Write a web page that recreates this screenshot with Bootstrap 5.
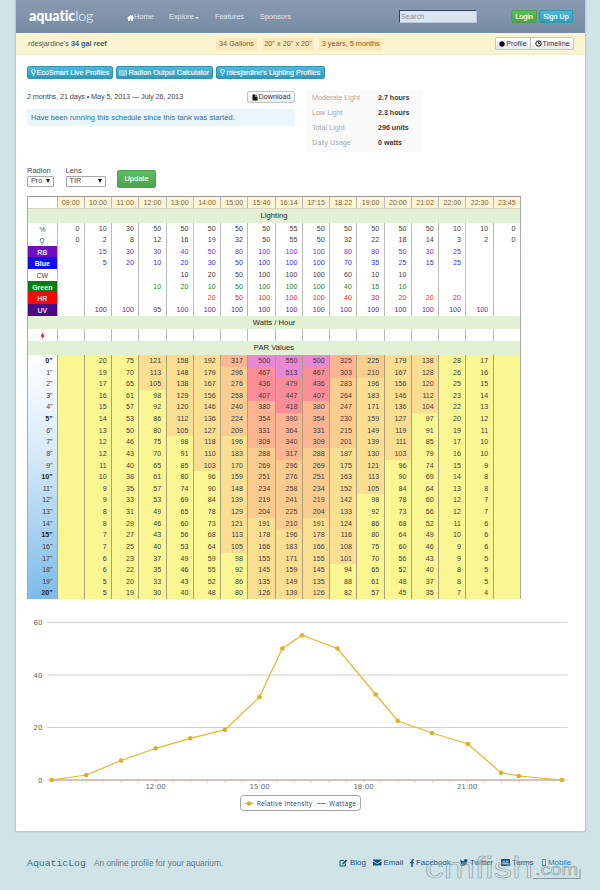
<!DOCTYPE html>
<html lang="en">
<head>
<meta charset="utf-8">
<meta name="viewport" content="width=device-width, initial-scale=1">
<title>AquaticLog</title>
<link href="https://cdn.jsdelivr.net/npm/bootstrap@5.3.0/dist/css/bootstrap.min.css" rel="stylesheet">
<style>
body{font-family:"Liberation Sans",Arial,sans-serif;font-size:7.5px;line-height:1.2;color:#4a4450;background:#d0e4e8;height:890px;overflow:hidden}
a{text-decoration:none}
svg{flex:none}
.sheet{width:569px;height:831px;margin-left:16px;background:#fff;box-shadow:0 0 1.5px 1px #b2c5cf}
.topbar{height:33px;padding:0 11px 0 13px;background:linear-gradient(#899bb0,#778ca6)}
.logo{font-family:Lato,sans-serif;font-weight:900;font-size:14.3px;color:#fff;width:98px;letter-spacing:-.1px;line-height:1}
.logo span{font-weight:300}
.topbar .menu{padding-top:2px}
.topbar .menu a{color:#e3e9f0;font-size:7.35px}
.w-home{width:42px}.w-exp{width:46px}.w-feat{width:45px}.w-spon{width:139px}
.caret{border:2.5px solid transparent;border-top-color:#fff;border-bottom:0;margin-left:1px}
.search{width:78px;height:13px;border:1px solid #34445a;border-right-color:#bccadb;border-bottom-color:#bccadb;border-radius:0;background:#dbe5f2;font-size:7.3px;padding:0 1px;margin-right:34px}
.search::placeholder{color:#8792a2}
.btn{--bs-btn-padding-x:0;--bs-btn-padding-y:0;--bs-btn-border-radius:2px;--bs-btn-font-size:7.2px;--bs-btn-line-height:1;height:13px;display:flex;align-items:center;justify-content:center;gap:1px;white-space:nowrap}
.btn-teal{--bs-btn-color:#f0fbff;--bs-btn-border-color:#2f95b4;background:linear-gradient(#50b9d8,#3199ba);-webkit-text-stroke:.15px}
.btn-leaf{--bs-btn-color:#f4fff4;--bs-btn-border-color:#4ba44b;background:linear-gradient(#5dbd5d,#4ba44b);-webkit-text-stroke:.15px}
.btn-plain{--bs-btn-color:#3c3440;--bs-btn-border-color:#c4c4c8;background:linear-gradient(#fff,#e9e9ec)}
.tankbar{height:22px;background:#faf5d0;border-bottom:1px solid #f2ecc4;padding:0 11px 0 12px}
.tankbar .owner{width:188px;color:#2a6173;font-size:7.25px;padding-top:1px}
.fact{height:12px;background:#fce8ba;color:#7b6030;border-radius:1px;font-size:7.3px;display:flex;align-items:center;justify-content:center;padding-top:1px}
.content-pad{padding:11px 11px 0}
.upper{height:86px}
.left-col{width:268px}
.dates{font-size:7.3px;line-height:11px;letter-spacing:-.11px}
.note{height:17px;background:#ebf5fc;color:#2f6f8d;padding-left:4px;font-size:7.5px;letter-spacing:.04px;margin-top:6px;border-radius:1px}
.stats{width:117px;height:61px;background:#fafafa;padding:0 6px;margin-left:11px}
.stats dt{width:66px;font-weight:400;color:#aaa;font-size:7.2px}
.stats dd{margin:0;font-weight:700;color:#3a3a3e;font-size:7.1px}
.stats div{height:15px}
.picker{height:11.5px;border:1px solid #aaa;border-radius:1px;padding:0 3px;font-size:7.3px;background:#fdfdfd;display:flex;align-items:center;justify-content:space-between;margin-top:1px}
.picker i{border:2px solid transparent;border-top:4px solid #111;border-bottom:0}
.controls{height:31px;padding-top:1px}
.plan{width:494px;display:block;border:1px solid #aaa;border-bottom:0;border-top-color:#999;font-size:7.1px;color:#443b40}
.plan thead,.plan tbody{display:block}
.plan tr{display:grid;grid-template-columns:28.6px repeat(17,minmax(0,1fr));height:11.63px}
.plan td,.plan th{height:100%;padding:0 4.5px 0 0;border-left:1px solid #b9b9b4;text-align:right;line-height:13.4px;font-weight:400;overflow:hidden}
.plan tr>:first-child{border-left:0}
.plan .hours{height:12.2px;font-size:7.1px}
.plan .hours th{background:#fdf5d6;color:#79663a;text-align:center;padding:0;border-bottom:1px solid #d9d4bd}
.plan .hours th:first-child{background:#fff}
.plan .band{display:block;height:13.9px;background:#e2f0d6}
.plan .band td{display:block;text-align:center;padding:0;line-height:14.4px;font-size:7.7px;color:#2a2a2a;border:0}
.plan .lit th{text-align:center;padding:0;font-size:7px}
.k-rb th{background:#6e0cc4;color:#e8d5ff!important;font-weight:700!important}.k-rb td{color:#7a2cc8}
.k-blue th{background:#1111e0;color:#fff;font-weight:700!important}.k-blue td{color:#3730e0}
.k-green th{background:#087c10;color:#e5ffe5;font-weight:700!important}.k-green td{color:#2a8032}
.k-hr th{background:#fb0509;color:#ffd5d5;font-weight:700!important}.k-hr td{color:#ee2630}
.k-uv th{background:#4a0a88;color:#e5d5ff;font-weight:700!important}.k-uv td{color:#5f2790}
.depths{background:linear-gradient(90deg,transparent 28.6px,#faf793 28.6px),linear-gradient(#fff,#d8eafa 40%,#7dbbe8)}
.plan .depths th{padding-right:4px}
.plan .depths tr td{border-left-color:#a9a478}
.plan .depths tr:nth-child(5n+1) th{font-weight:700;color:#222}
.p1{background:#fade92}.p2{background:#fbcc90}.p3{background:#fdb490}.p4{background:#fb8d96}.p5{background:#e887d2}
.chart{display:block;margin:0 0 0 -11px}
.chart text{font-family:"DejaVu Sans",sans-serif;font-size:7px;fill:#666}
.chart .key text{font-family:"Open Sans",sans-serif;font-size:6.7px;fill:#274b6d}
.foot{padding:27px 0 0 27px;font-size:7.9px;height:59px;position:relative}
.foot .name{font-family:"Liberation Mono",monospace;font-size:9.8px;color:#2b718c;width:67px}
.foot .tag{color:#65777e;font-size:8.3px;width:245px;padding-top:1px}
.foot a{color:#17527c;display:flex;align-items:center;white-space:nowrap;gap:2px}
.stamp{position:absolute;left:424px;top:16px}
.stamp text{font-family:"Liberation Sans",sans-serif;fill:rgba(208,228,232,.25);stroke:#83949a;stroke-width:.5px}
</style>
</head>
<body>
<main class="sheet">
  <nav class="topbar d-flex align-items-center">
    <a class="logo" href="#">aquatic<span>log</span></a>
    <div class="menu d-flex">
      <a href="#" class="w-home d-flex align-items-center"><svg width="7" height="6" viewBox="0 0 14 12"><path fill="#fff" d="M7 0 0 6l1 1 1-1v6h4V8h2v4h4V6l1 1 1-1-2-2V1h-2v1z"/></svg>Home</a>
      <a href="#" class="w-exp d-flex align-items-center">Explore<span class="caret"></span></a>
      <a href="#" class="w-feat">Features</a>
      <a href="#" class="w-spon">Sponsors</a>
    </div>
    <input class="form-control search" placeholder="Search">
    <div class="d-flex login-set">
      <a class="btn btn-leaf" href="#" style="width:26px">Login</a>
      <a class="btn btn-teal" href="#" style="width:34px;margin-left:2px">Sign Up</a>
    </div>
  </nav>
  <div class="tankbar d-flex align-items-center">
    <span class="owner">rdesjardine's <b>34 gal reef</b></span>
    <span class="fact" style="width:41px">34 Gallons</span>
    <span class="fact" style="width:51px;margin-left:5.5px">20" x 20" x 20"</span>
    <span class="fact" style="width:63.5px;margin-left:5.5px">3 years, 5 months</span>
    <div class="btn-group ms-auto">
      <a class="btn btn-plain" href="#" style="width:36px"><svg width="6" height="6"><circle cx="3" cy="3" r="2.7" fill="#111"/></svg>Profile</a>
      <a class="btn btn-plain" href="#" style="width:44px"><svg width="7" height="7"><circle cx="3.5" cy="3.5" r="2.7" fill="none" stroke="#111"/><path d="M3.5 1.5v2H5" fill="none" stroke="#111" stroke-width=".8"/></svg>Timeline</a>
    </div>
  </div>
  <div class="content-pad">
    <div class="d-flex mb-0" style="gap:2.5px;height:25px">
      <a class="btn btn-teal" href="#" style="width:86px"><svg width="5" height="7" viewBox="0 0 5 7"><path d="M1.7 4.7C1.7 3.5.6 3.3.6 2.2a1.9 1.7 0 0 1 3.8 0c0 1.1-1.1 1.3-1.1 2.5zM1.7 6.2h1.6" fill="none" stroke="#fff" stroke-width=".9"/></svg>EcoSmart Live Profiles</a>
      <a class="btn btn-teal" href="#" style="width:97.5px"><svg width="8" height="6" viewBox="0 0 8 6"><path d="M.4.9h7.2v4.2H.4z" fill="none" stroke="#fff" stroke-width=".7"/><path d="M1.2 2.2h5.6M1.2 3.2h5.6M2 4.2h4" stroke="#fff" stroke-width=".6" stroke-dasharray=".7 .3"/></svg>Radion Output Calculator</a>
      <a class="btn btn-teal" href="#" style="width:109.5px"><svg width="5" height="7" viewBox="0 0 5 7"><path d="M1.7 4.7C1.7 3.5.6 3.3.6 2.2a1.9 1.7 0 0 1 3.8 0c0 1.1-1.1 1.3-1.1 2.5zM1.7 6.2h1.6" fill="none" stroke="#fff" stroke-width=".9"/></svg>rdesjardine's Lighting Profiles</a>
    </div>
    <div class="upper d-flex">
      <div class="left-col">
        <div class="d-flex justify-content-between">
          <span class="dates">2 months, 21 days • May 5, 2013 — July 26, 2013</span>
          <a class="btn btn-plain" href="#" style="width:48px;height:12px"><svg width="6" height="7"><path d="M.5.5H3v2.3h2.5V6.5h-5zM3.5.5l2 1.8h-2z" fill="#111"/></svg>Download</a>
        </div>
        <div class="note d-flex align-items-center">Have been running this schedule since this tank was started.</div>
      </div>
      <dl class="stats mb-0">
        <div class="d-flex align-items-center"><dt>Moderate Light</dt><dd>2.7 hours</dd></div>
        <div class="d-flex align-items-center"><dt>Low Light</dt><dd>2.3 hours</dd></div>
        <div class="d-flex align-items-center"><dt>Total Light</dt><dd>296 units</dd></div>
        <div class="d-flex align-items-center"><dt>Daily Usage</dt><dd>0 watts</dd></div>
      </dl>
    </div>
    <div class="controls d-flex align-items-start" style="margin-top:-12.5px">
      <div style="width:38.5px">Radion<div class="picker" style="width:27px">Pro <i></i></div></div>
      <div style="width:51.5px">Lens<div class="picker" style="width:40.5px">TIR <i></i></div></div>
      <a class="btn btn-leaf" href="#" style="width:39px;height:18px;font-size:7.5px;margin-top:4px">Update</a>
    </div>
    <table class="plan" id="plan"></table>
    <svg class="chart" id="chart" width="569" height="224" viewBox="16 599 569 224"></svg>
  </div>
</main>
<footer class="foot d-flex align-items-start">
  <span class="name">AquaticLog</span>
  <span class="tag">An online profile for your aquarium.</span>
  <div class="d-flex">
    <a href="#" style="width:34px"><svg width="9" height="8"><path d="M6.5 4.5V7H1V1.5h4" fill="none" stroke="#17527c"/><path d="M3 5.5 3.5 4 7 .5l1.3 1.3-3.6 3.5z" fill="#17527c"/></svg>Blog</a>
    <a href="#" style="width:37px"><svg width="8.5" height="7"><path d="M0 .5h8.5v1L4.25 4.2 0 1.5zM0 2.5l4.25 2.6L8.5 2.5v4H0z" fill="#17527c"/></svg>Email</a>
    <a href="#" style="width:50px"><svg width="4" height="8"><path d="M1.2 8V4.3H0V3h1.2V2C1.2.6 2 0 4 .2v1.3c-1 0-1.3 0-1.3.7V3H4l-.2 1.3H2.7V8z" fill="#17527c"/></svg>Facebook</a>
    <a href="#" style="width:41px"><svg width="8" height="7" viewBox="0 0 16 14"><path d="M0 12c2 0 3.5-.4 4.8-1.3C3.3 10.6 2 9.6 1.7 8.4h1.5C1.5 8 .6 6.6.6 5l1.5.4C.6 4.3.2 2.5 1.1 1c1.7 2 4 3.2 6.8 3.400C7.3 2 9 0 11.2 0c1 0 1.8.4 2.4 1l2-.8-1.3 1.9L16 1.7l-1.6 1.7C14.5 9.5 10 14 5 13.6 3.3 13.5 1.5 13 0 12z" fill="#17527c"/></svg>Twitter</a>
    <a href="#" style="width:41px"><svg width="9" height="7"><path d="M.5.5h8v6h-8z" fill="#2c668b" stroke="#17527c"/><path d="M2 2.5h2M5 2.5h2M2 4.5h5" stroke="#c4dbe4" stroke-width=".7"/></svg>Terms</a>
    <a href="#" style="color:#2c78ae"><svg width="4" height="7"><path d="M.5.5h3v6h-3z" fill="#d6ebf5" stroke="#2c78ae" stroke-width=".8"/></svg>Mobile</a>
  </div>
  <svg class="stamp" width="164" height="40" aria-hidden="true"><text x="1" y="31" font-size="30" textLength="108" lengthAdjust="spacingAndGlyphs">cmfish</text><text x="111" y="28" font-size="16" textLength="43" lengthAdjust="spacingAndGlyphs">.com</text><path d="M109 31.5h47V22" fill="none" stroke="#83949a" stroke-width="1"/></svg>
</footer>
<script>
const hours = "09:00 10:00 11:00 12:00 13:00 14:00 15:00 15:40 16:14 17:15 18:22 19:00 20:00 21:02 22:00 22:30 23:45".split(" ");
const bulb = '<svg width="6" height="7" viewBox="0 0 5 7"><path d="M1.7 4.7C1.7 3.5.6 3.3.6 2.2a1.9 1.7 0 0 1 3.8 0c0 1.1-1.1 1.3-1.1 2.5zM1.7 6.2h1.6" fill="none" stroke="#2b6878" stroke-width=".8"/></svg>';
const bolt = '<svg width="5" height="7"><path d="M2 .3h1.5L3 2.3h1.6L2 6.8l.5-3H.8z" fill="#c01822"/></svg>';
const lights = [
  ["k-pct", '<span style="color:#2b6878">%</span>', "0,10,30,50,50,50,50,50,55,50,50,50,50,50,10,10,0"],
  ["k-int", bulb, "0,2,8,12,16,19,32,50,55,50,32,22,18,14,3,2,0"],
  ["k-rb", "RB", ",15,30,30,40,50,80,100,100,100,80,80,50,30,25,,"],
  ["k-blue", "Blue", ",5,20,10,20,30,50,100,100,100,70,35,25,15,25,,"],
  ["k-cw", "CW", ",,,,10,20,50,100,100,100,60,10,10,,,,"],
  ["k-green", "Green", ",,,10,20,10,50,100,100,100,40,15,10,,,,"],
  ["k-hr", "HR", ",,,,,20,50,100,100,100,40,30,20,20,20,,"],
  ["k-uv", "UV", ",100,100,95,100,100,100,100,100,100,100,100,100,100,100,100,"]
];
const par = `20 75 121 158 192 317 500 550 500 325 225 179 138 28 17
19 70 113 148 179 296 467 513 467 303 210 167 128 26 16
17 65 105 138 167 276 436 479 436 283 196 156 120 25 15
16 61 98 129 156 258 407 447 407 264 183 146 112 23 14
15 57 92 120 146 240 380 418 380 247 171 136 104 22 13
14 53 86 112 136 224 354 390 354 230 159 127 97 20 12
13 50 80 105 127 209 331 364 331 215 149 119 91 19 11
12 46 75 98 118 196 309 340 309 201 139 111 85 17 10
12 43 70 91 110 183 288 317 288 187 130 103 79 16 10
11 40 65 85 103 170 269 296 269 175 121 96 74 15 9
10 38 61 80 96 159 251 276 251 163 113 90 69 14 8
9 35 57 74 90 148 234 258 234 152 105 84 64 13 8
9 33 53 69 84 139 219 241 219 142 98 78 60 12 7
8 31 49 65 78 129 204 225 204 133 92 73 56 12 7
8 29 46 60 73 121 191 210 191 124 86 68 52 11 6
7 27 43 56 68 113 178 196 178 116 80 64 49 10 6
7 25 40 53 64 105 166 183 166 108 75 60 46 9 6
6 23 37 49 59 98 155 171 155 101 70 56 43 9 5
6 22 35 46 55 92 145 159 145 94 65 52 40 8 5
5 20 33 43 52 86 135 149 135 88 61 48 37 8 5
5 19 30 40 48 80 126 139 126 82 57 45 35 7 4`.split("\n").map(r => ["", ...r.split(" "), ""]);
const band = t => `<tr class="band"><td>${t}</td></tr>`;
document.getElementById("plan").innerHTML =
  `<thead><tr class="hours"><th></th>${hours.map(h => `<th>${h}</th>`).join("")}</tr></thead><tbody>` +
  band("Lighting") +
  lights.map(([k, n, v]) => `<tr class="lit ${k}"><th>${n}</th>${v.split(",").map(x => `<td>${x}</td>`).join("")}</tr>`).join("") +
  band("Watts / Hour") +
  `<tr class="lit"><th>${bolt}</th>${hours.map(() => "<td></td>").join("")}</tr>` +
  band("PAR Values") + `</tbody><tbody class="depths">` +
  par.map((r, i) => `<tr><th>${i}"</th>${r.map(x => `<td class="p${Math.floor(x / 100)}">${x}</td>`).join("")}</tr>`).join("") + "</tbody>";

const pts = [[51.7,780],[86.3,775],[121,760.5],[155.7,748.3],[190.3,738.3],[225,729.7],[259.5,697],[282.3,648.5],[302,635.2],[337.5,648.5],[375.7,694.5],[397.7,720.7],[432,733],[468,744],[501,772.7],[518.7,776],[562,780]];
let s = "";
[[622.3,60],[675,40],[727.5,20],[780,0]].forEach(([y, n]) => {
  s += `<path d="M47 ${y}H567.5" stroke="#cfcfcf"/><text x="42.5" y="${y + 2.5}" text-anchor="end">${n}</text>`;
});
for (let x = 69.2; x < 566; x += 17.3) s += `<path d="M${x} 780v3" stroke="#c8ccd0" stroke-width=".7"/>`;
[["12:00",155.5],["15:00",259.7],["18:00",363.5],["21:00",467]].forEach(([t, x]) => s += `<text x="${x}" y="788.5" text-anchor="middle">${t}</text>`);
s += '<path d="M51.7 780H562" stroke="#c99a90"/>';
s += `<polyline points="${pts.join(" ")}" fill="none" stroke="#e3b72e" stroke-width="1.2"/>`;
pts.forEach(([x, y]) => s += `<circle cx="${x}" cy="${y}" r="2.3" fill="#e0b01e"/>`);
s += `<g class="key"><rect x="240.5" y="795.5" width="120" height="15" rx="3" fill="#fff" stroke="#a3a3a3"/>
<path d="M244.5 803.5h9" stroke="#e0b01e"/><circle cx="249" cy="803.5" r="2.3" fill="#e0b01e"/><text x="256.7" y="805.8" textLength="55.5">Relative Intensity</text>
<path d="M317 803.5h9" stroke="#d0705f"/><text x="329" y="805.8" textLength="27">Wattage</text></g>`;
document.getElementById("chart").innerHTML = s;
</script>
<script src="https://cdn.jsdelivr.net/npm/bootstrap@5.3.0/dist/js/bootstrap.bundle.min.js"></script>
</body>
</html>
